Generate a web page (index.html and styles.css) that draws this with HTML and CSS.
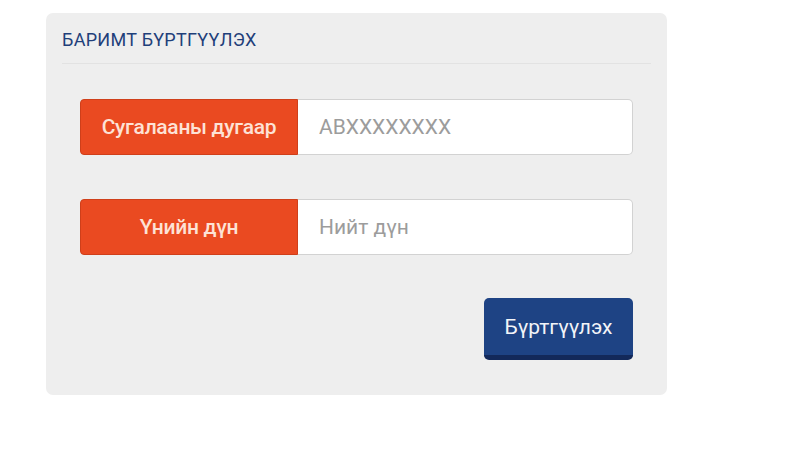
FILE: index.html
```html
<!DOCTYPE html>
<html lang="mn">
<head>
    <meta charset="UTF-8">
    <meta name="viewport" content="width=device-width, initial-scale=1.0">
    <title>Баримт бүртгүүлэх</title>
    <link rel="stylesheet" href="styles.css">
</head>
<body>
    <div class="receipt-panel">
        <h2 class="receipt-title">БАРИМТ БҮРТГҮҮЛЭХ</h2>
        <form id="receiptForm" class="receipt-form">
            <div class="input-group">
                <label for="lottery" class="input-label">Сугалааны дугаар</label>
                <input type="text" id="lottery" name="lottery" placeholder="ABXXXXXXXX">
            </div>
            <div class="input-group">
                <label for="amount" class="input-label">Үнийн дүн</label>
                <input type="text" id="amount" name="amount" placeholder="Нийт дүн">
            </div>
            <div class="form-actions">
                <button type="submit" class="btn-submit">Бүртгүүлэх</button>
            </div>
        </form>
    </div>
</body>
</html>
```

FILE: styles.css
```css
body {
    margin: 0;
    background-color: #fff;
    font-family: "Roboto", "Liberation Sans", sans-serif;
}
.receipt-panel {
    margin: 13px 0 0 46px;
    width: 621px;
    height: 382px;
    box-sizing: border-box;
    background-color: #eeeeee;
    border-radius: 7px;
}
.receipt-title {
    margin: 0 16px;
    height: 50px;
    line-height: 54px;
    font-size: 18px;
    font-weight: normal;
    letter-spacing: 0.3px;
    color: #1f3f7a;
    border-bottom: 1px solid #e2e2e2;
}
.receipt-form {
    padding: 35px 34px 0 34px;
}
.input-group {
    display: flex;
    height: 56px;
    margin-bottom: 44px;
}
.input-label {
    width: 218px;
    flex-shrink: 0;
    display: flex;
    align-items: center;
    justify-content: center;
    background-color: #ea4a21;
    border: 1px solid #cf3f1a;
    border-radius: 4px 0 0 4px;
    box-sizing: border-box;
    color: #fde2d6;
    font-size: 21px;
    font-weight: 500;
    letter-spacing: -0.3px;
}
.input-group input {
    flex: 1;
    min-width: 0;
    box-sizing: border-box;
    border: 1px solid #d2d2d2;
    border-left: none;
    border-radius: 0 5px 5px 0;
    background-color: #fff;
    padding: 0 21px;
    font-family: inherit;
    font-size: 21px;
    color: #555;
    outline: none;
}
.input-group input::placeholder {
    color: #9c9c9c;
}
.form-actions {
    display: flex;
    justify-content: flex-end;
    margin-top: -1px;
}
.btn-submit {
    width: 149px;
    height: 62px;
    border: none;
    border-bottom: 5px solid #13295a;
    border-radius: 5px;
    background-color: #1e4384;
    color: #f2f4f8;
    font-family: inherit;
    font-size: 21px;
    cursor: pointer;
    padding: 0;
}
```
